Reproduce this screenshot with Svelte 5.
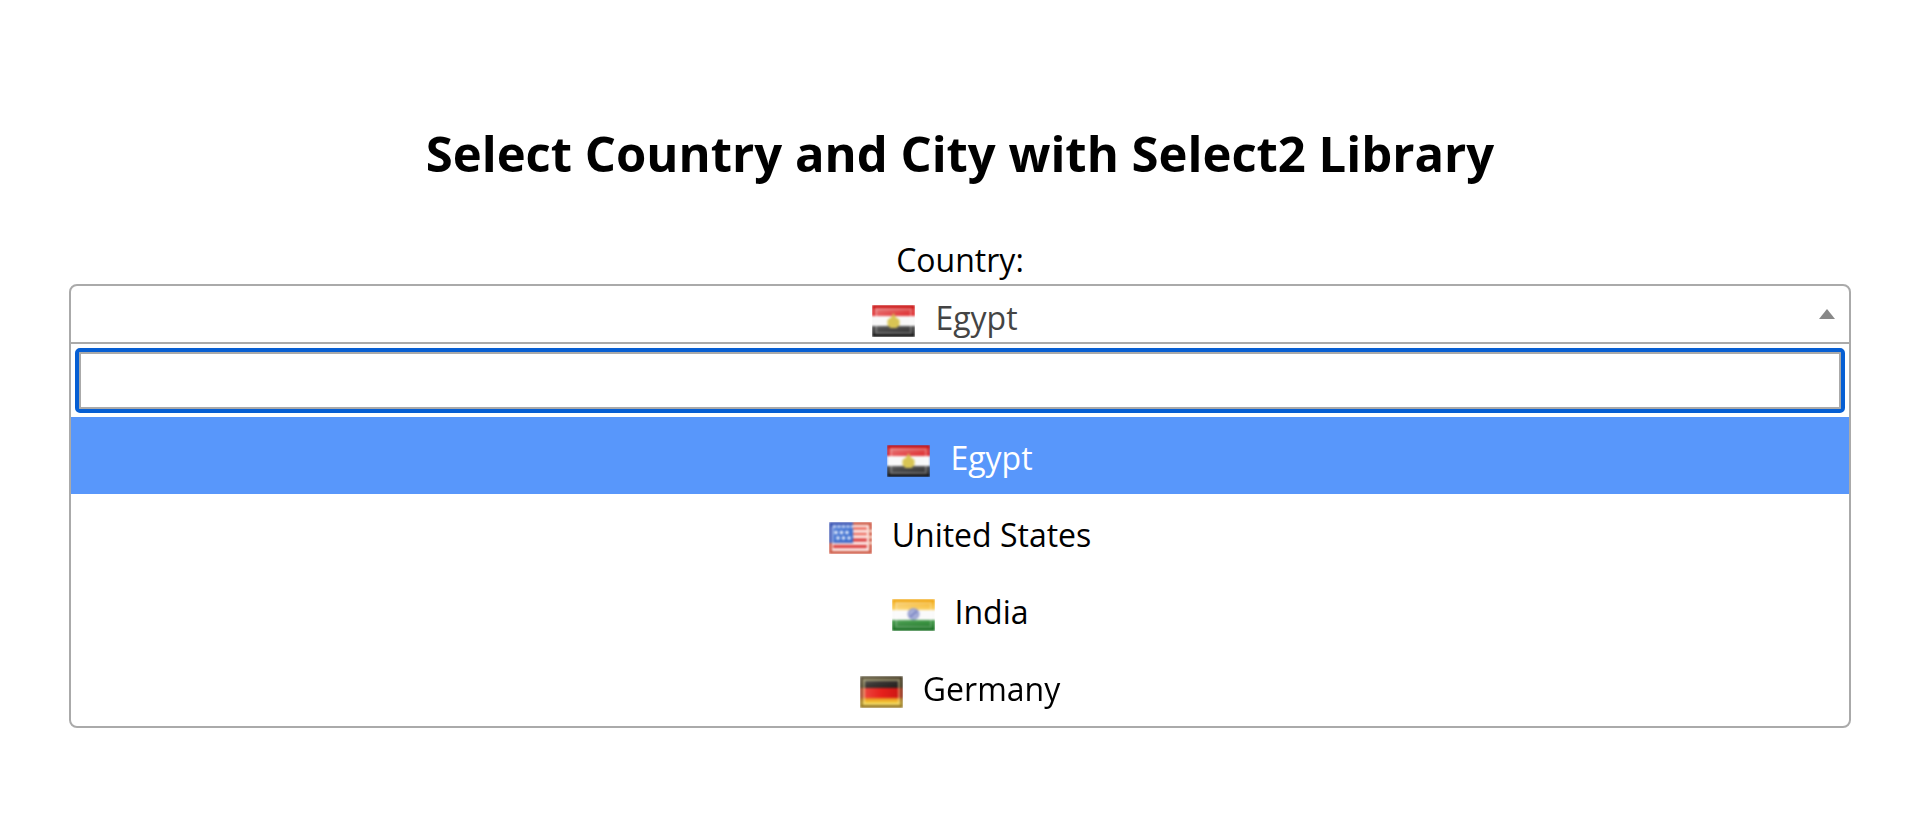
<script>
  const countries = [
    { code: 'eg', name: 'Egypt' },
    { code: 'us', name: 'United States' },
    { code: 'in', name: 'India' },
    { code: 'de', name: 'Germany' }
  ];

  let selected = $state(countries[0]);
  let active = $state('eg');
  let query = $state('');
  let open = $state(true);
  let search = $state();

  const matches = $derived(
    countries.filter((c) => c.name.toLowerCase().includes(query.toLowerCase()))
  );

  $effect(() => {
    if (open && search) search.focus();
  });

  function choose(country) {
    selected = country;
    active = country.code;
    open = false;
    query = '';
  }
</script>

{#snippet flag(code)}
  <svg class="flag" viewBox="0 0 43 32" aria-hidden="true">
    <defs>
      <linearGradient id="eg-red" x1="0" y1="0" x2="0" y2="1">
        <stop offset="0" stop-color="#c40404" />
        <stop offset="0.5" stop-color="#dc3838" />
        <stop offset="1" stop-color="#e02428" />
      </linearGradient>
      <linearGradient id="eg-black" x1="0" y1="0" x2="0" y2="1">
        <stop offset="0" stop-color="#4a4a4a" />
        <stop offset="0.7" stop-color="#2c2c2c" />
        <stop offset="1" stop-color="#040404" />
      </linearGradient>
      <linearGradient id="in-saffron" x1="0" y1="0" x2="0" y2="1">
        <stop offset="0" stop-color="#efa208" />
        <stop offset="1" stop-color="#fcd05c" />
      </linearGradient>
      <linearGradient id="in-green" x1="0" y1="0" x2="0" y2="1">
        <stop offset="0" stop-color="#3f9a45" />
        <stop offset="1" stop-color="#146a1e" />
      </linearGradient>
      <linearGradient id="de-black" x1="0" y1="0" x2="1" y2="1">
        <stop offset="0" stop-color="#74746c" />
        <stop offset="0.5" stop-color="#3a3634" />
        <stop offset="1" stop-color="#1e1a18" />
      </linearGradient>
      <linearGradient id="de-red" x1="0" y1="0" x2="1" y2="0">
        <stop offset="0" stop-color="#ee5048" />
        <stop offset="0.5" stop-color="#e6201c" />
        <stop offset="1" stop-color="#c81412" />
      </linearGradient>
      <linearGradient id="de-gold" x1="0" y1="0" x2="0" y2="1">
        <stop offset="0" stop-color="#e88a20" />
        <stop offset="0.5" stop-color="#f6d038" />
        <stop offset="1" stop-color="#c89a28" />
      </linearGradient>
      <linearGradient id="us-blue" x1="0" y1="0" x2="1" y2="1">
        <stop offset="0" stop-color="#5a84d8" />
        <stop offset="1" stop-color="#3468cc" />
      </linearGradient>
      <linearGradient id="gloss" x1="0" y1="0" x2="1" y2="1">
        <stop offset="0" stop-color="#fff" stop-opacity="0.3" />
        <stop offset="0.5" stop-color="#fff" stop-opacity="0.08" />
        <stop offset="1" stop-color="#fff" stop-opacity="0" />
      </linearGradient>
      <filter id="soften" x="0" y="0" width="1" height="1" color-interpolation-filters="sRGB">
        <feGaussianBlur stdDeviation="1" edgeMode="duplicate" />
      </filter>
    </defs>
    {#if code === 'eg'}
      <g filter="url(#soften)">
        <rect width="43" height="11" fill="url(#eg-red)" />
        <rect y="11" width="43" height="10" fill="#f8f8f8" />
        <rect y="21" width="43" height="11" fill="url(#eg-black)" />
        <rect x="3" y="3" width="37" height="26" fill="url(#gloss)" />
        <rect x="4" y="4" width="35" height="24" fill="none" stroke="#fff" stroke-width="2" opacity="0.25" />
        <path d="M21.500 8l2 4 4 3v5l-3 3h-6l-3-3v-5l4-3z" fill="#d8c554" />
      </g>
    {:else if code === 'us'}
      <g filter="url(#soften)">
        <rect width="43" height="32" fill="#cf5c48" />
        <rect x="3" y="3" width="37" height="26" fill="#fff4f2" />
        <path d="M24 6.500h14M24 12h14" stroke="#ec7468" stroke-width="3" />
        <path d="M24 18h14M4 24.500h34" stroke="#dc4444" stroke-width="3.500" />
        <path d="M38 8h5v2h-5zM38 14h5v2h-5zM38 20h5v2h-5z" fill="#fbd8c8" />
        <rect width="24" height="21" fill="#4058b4" />
        <rect x="3" y="3" width="21" height="17" fill="url(#us-blue)" />
        <path d="M4 4.500h20" stroke="#d4e0f8" stroke-width="2.500" stroke-dasharray="3 1.500" />
        <path d="M3.500 5v16" stroke="#a8bcec" stroke-width="1.500" />
        <g fill="#f4f8ff">
          <circle cx="7" cy="10.500" r="1.700" /><circle cx="12.500" cy="10.500" r="1.700" /><circle cx="18" cy="10.500" r="1.700" />
          <circle cx="9" cy="16" r="1.700" /><circle cx="14.500" cy="16" r="1.700" /><circle cx="20" cy="16" r="1.700" />
        </g>
      </g>
    {:else if code === 'in'}
      <g filter="url(#soften)">
        <rect width="43" height="11" fill="url(#in-saffron)" />
        <rect y="11" width="43" height="10" fill="#fafafa" />
        <rect y="21" width="43" height="11" fill="url(#in-green)" />
        <rect x="3" y="3" width="37" height="26" fill="url(#gloss)" />
        <rect x="4" y="4" width="35" height="24" fill="none" stroke="#fff" stroke-width="2" opacity="0.2" />
        <circle cx="21.500" cy="15" r="5" fill="#a9b1da" stroke="#98a0d0" stroke-width="2" />
        <path d="M18 18l7-6" stroke="#7c86c4" stroke-width="2" />
      </g>
    {:else}
      <g filter="url(#soften)">
        <rect width="43" height="12" fill="url(#de-black)" />
        <rect y="12" width="43" height="10" fill="url(#de-red)" />
        <rect y="22" width="43" height="10" fill="url(#de-gold)" />
        <path d="M0 0h43v32H0zM3 3v26h37V3z" fill="#5c4c20" fill-rule="evenodd" opacity="0.5" />
        <rect x="4" y="4" width="35" height="24" fill="none" stroke="#f3eca8" stroke-width="2" opacity="0.5" />
      </g>
    {/if}
  </svg>
{/snippet}

<main>
  <h1>Select Country and City with Select2 Library</h1>

  <label for="country">Country:</label>
  <div class="select">
    <button
      id="country"
      class="selection"
      type="button"
      aria-haspopup="true"
      aria-expanded={open}
      onclick={() => (open = !open)}
    >
      <span class="choice">{@render flag(selected.code)}<span>{selected.name}</span></span>
      <span class="arrow"></span>
    </button>

    {#if open}
      <div class="dropdown">
        <div class="search">
          <input type="search" aria-label="Search countries" bind:value={query} bind:this={search} />
        </div>
        <ul>
          {#each matches as country (country.code)}
            <li>
              <button
                type="button"
                class="option"
                class:active={active === country.code}
                onmouseenter={() => (active = country.code)}
                onclick={() => choose(country)}
              >
                {@render flag(country.code)}<span>{country.name}</span>
              </button>
            </li>
          {/each}
        </ul>
      </div>
    {/if}
  </div>
</main>

<style>
  :global(body) {
    background: #fff;
  }

  main {
    padding: 115px 69px 64px;
    color: #000;
    font: 32px/44px 'Segoe UI', 'Open Sans', 'Noto Sans', sans-serif;
    text-align: center;
  }

  h1 {
    margin: 0 0 47px;
    font-size: 49px;
    font-weight: 700;
    line-height: 76px;
  }

  label {
    display: block;
    padding-bottom: 2px;
  }

  .select {
    border: 2px solid #aaa;
    border-radius: 8px;
    overflow: hidden;
  }

  button {
    display: flex;
    align-items: center;
    justify-content: center;
    width: 100%;
    border: 0;
    background: none;
    color: inherit;
    font: inherit;
    cursor: pointer;
  }

  .selection {
    padding: 10px 14px 2px 0;
    color: #444;
  }

  .choice {
    display: flex;
    flex: 1;
    align-items: center;
    justify-content: center;
  }

  .arrow {
    border: 8px solid transparent;
    border-top: 0;
    border-bottom: 10px solid #888;
    margin-bottom: 8px;
  }

  .flag {
    flex: none;
    width: 43px;
    height: 32px;
    margin: 6px 20px 0 0;
  }

  .dropdown {
    border-top: 2px solid #aaa;
  }

  .search {
    padding: 8px;
  }

  input {
    display: block;
    box-sizing: border-box;
    width: 100%;
    height: 57px;
    padding: 8px;
    border: 2px solid #aaa;
    border-radius: 1px;
    outline: 0;
    background: #fff;
    font: inherit;
    appearance: none;
  }

  input:focus {
    outline: 4px solid #075fd3;
  }

  ul {
    margin: 0;
    padding: 0 0 1px;
    list-style: none;
  }

  .option {
    padding: 19px 12px 14px;
  }

  .option.active {
    background: #5897fb;
    color: #fff;
  }
</style>
